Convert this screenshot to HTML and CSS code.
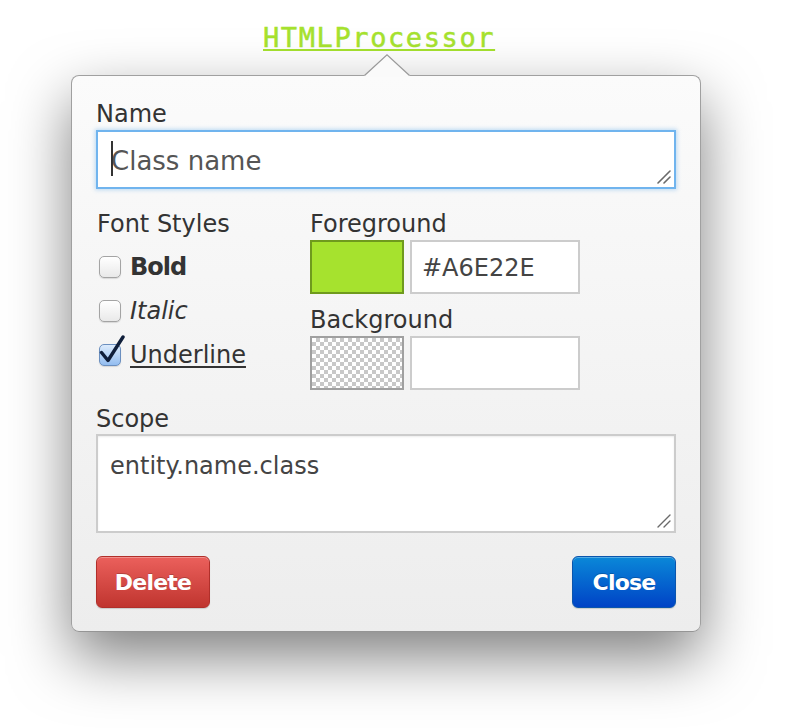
FILE: index.html
```html
<!DOCTYPE html>
<html lang="en">
<head>
<meta charset="utf-8">
<title>Theme class editor</title>
<link rel="stylesheet" href="styles.css">
</head>
<body>
<div class="stage">
  <div class="title"><span class="class-link">HTMLProcessor</span></div>
  <div class="popover">
    <svg class="arrow" width="46" height="23" viewBox="0 0 46 23">
      <path d="M0 22 L23 0.8 L46 22 L46 23 L0 23 Z" fill="#fafafa"/>
      <path d="M0.5 21.5 L23 0.8 L45.5 21.5" fill="none" stroke="#9a9a9a" stroke-width="1.2"/>
    </svg>

    <div class="field-label">Name</div>
    <div class="field field-focus name-field">
      <textarea class="input name-input" placeholder="Class name"></textarea>
      <span class="caret"></span>
      <svg class="grip" width="14" height="14" viewBox="0 0 14 14">
        <path d="M1 13 L13 1 M7 13 L13 7" stroke="#6a6a6a" stroke-width="1.6" stroke-linecap="round"/>
      </svg>
    </div>

    <div class="styles-row">
      <div class="font-styles">
        <div class="field-label">Font Styles</div>
        <div class="check-row"><span class="checkbox"></span><span class="opt opt-bold">Bold</span></div>
        <div class="check-row"><span class="checkbox"></span><span class="opt opt-italic">Italic</span></div>
        <div class="check-row">
          <span class="checkbox checked">
            <svg class="tick" width="28" height="30" viewBox="0 0 28 30">
              <path d="M3.5 17.5 L10 25.5 L25 2" fill="none" stroke="#0f1e3a" stroke-width="3.4" stroke-linecap="round" stroke-linejoin="round"/>
            </svg>
          </span>
          <span class="opt opt-underline">Underline</span>
        </div>
      </div>
      <div class="colors">
        <div class="field-label">Foreground</div>
        <div class="color-row">
          <span class="swatch swatch-fg"></span>
          <input class="hex" type="text" value="#A6E22E">
        </div>
        <div class="field-label bg-label">Background</div>
        <div class="color-row">
          <span class="swatch swatch-checker"></span>
          <input class="hex" type="text" value="">
        </div>
      </div>
    </div>

    <div class="field-label scope-label">Scope</div>
    <div class="field scope-field">
      <textarea class="input scope-input">entity.name.class</textarea>
      <svg class="grip" width="14" height="14" viewBox="0 0 14 14">
        <path d="M1 13 L13 1 M7 13 L13 7" stroke="#6a6a6a" stroke-width="1.4" stroke-linecap="round"/>
      </svg>
    </div>

    <div class="actions">
      <button class="btn btn-delete" type="button">Delete</button>
      <button class="btn btn-close" type="button">Close</button>
    </div>
  </div>
</div>
</body>
</html>
```

FILE: styles.css
```css
html, body {
  margin: 0;
  padding: 0;
  background: #ffffff;
}

body {
  min-height: 728px;
  font-family: "DejaVu Sans", "Liberation Sans", sans-serif;
  color: #333333;
}

.stage {
  padding: 22px 0 96px 71px;
  width: 630px;
}

.title {
  padding-left: 192px;
  height: 32px;
  line-height: 32px;
  margin-bottom: 21px;
}

.class-link {
  font-family: "DejaVu Sans Mono", "Liberation Mono", monospace;
  font-size: 27px;
  letter-spacing: 1.6px;
  color: #a6e22e;
  -webkit-text-stroke: 0.5px #a6e22e;
  text-decoration: underline;
  text-decoration-thickness: 2px;
  text-underline-offset: 2px;
}

.popover {
  position: relative;
  box-sizing: border-box;
  width: 630px;
  height: 557px;
  padding: 24px 24px 0 24px;
  border: 1px solid #a0a0a0;
  border-bottom-color: #959595;
  border-radius: 8px;
  background: linear-gradient(#fbfbfb, #ededed);
  box-shadow: 0 25px 60px rgba(0, 0, 0, 0.5);
}

.arrow {
  position: absolute;
  left: 292px;
  top: -22px;
  display: block;
}

.field-label {
  font-size: 24px;
  line-height: 28px;
  height: 28px;
  color: #333333;
  margin-bottom: 2px;
}

.field {
  position: relative;
  box-sizing: border-box;
  border: 2px solid #cccccc;
  background: #ffffff;
}

.field-focus {
  border-color: #70b4ee;
  box-shadow: 0 0 4px 1px rgba(112, 180, 238, 0.45);
}

.input {
  display: block;
  box-sizing: border-box;
  width: 100%;
  height: 100%;
  margin: 0;
  border: 0;
  outline: none;
  resize: none;
  overflow: hidden;
  background: transparent;
  font-family: "DejaVu Sans", "Liberation Sans", sans-serif;
  color: #444444;
}

.name-field {
  height: 59px;
}

.name-input {
  font-size: 26px;
  line-height: 30px;
  padding: 14px 13px 0 13px;
}

.name-input::placeholder {
  color: #555555;
  opacity: 1;
}

.caret {
  position: absolute;
  left: 13px;
  top: 9px;
  width: 2px;
  height: 35px;
  background: #333333;
}

.grip {
  position: absolute;
  right: 3px;
  bottom: 3px;
  display: block;
}

.styles-row {
  display: grid;
  grid-template-columns: 214px 1fr;
  margin-top: 21px;
  height: 180px;
}

.font-styles {
  padding-left: 1px;
}

.font-styles .field-label {
  margin-bottom: 7px;
}

.check-row {
  display: flex;
  align-items: center;
  gap: 9px;
  height: 44px;
  padding-left: 2px;
}

.checkbox {
  position: relative;
  box-sizing: border-box;
  width: 22px;
  height: 22px;
  flex: none;
  border: 1px solid #a4a4a4;
  border-radius: 5px;
  background: linear-gradient(#ffffff, #e9e9e9);
  box-shadow: 0 1px 1px rgba(0, 0, 0, 0.12);
}

.checkbox.checked {
  border-color: #6b8fbf;
  background: linear-gradient(#dcebfc, #93bdf0);
}

.tick {
  position: absolute;
  left: -2px;
  top: -10px;
  display: block;
}

.opt {
  font-size: 24px;
  line-height: 28px;
  color: #333333;
}

.opt-bold {
  font-weight: bold;
  letter-spacing: -1px;
}

.opt-italic {
  font-style: italic;
}

.opt-underline {
  text-decoration: underline;
  text-decoration-thickness: 2px;
  text-underline-offset: 3px;
}

.color-row {
  display: flex;
  gap: 6px;
  height: 54px;
}

.bg-label {
  margin-top: 12px;
}

.swatch {
  box-sizing: border-box;
  width: 94px;
  height: 54px;
  border: 2px solid #a0a0a0;
}

.swatch-fg {
  background: #a6e22e;
  border-color: #6f9a1d;
}

.swatch-checker {
  background-color: #ffffff;
  background-image: conic-gradient(#c8c8c8 25%, #ffffff 0 50%, #c8c8c8 0 75%, #ffffff 0);
  background-size: 8px 8px;
}

.hex {
  box-sizing: border-box;
  width: 170px;
  height: 54px;
  margin: 0;
  padding: 2px 10px 0 10px;
  border: 2px solid #cccccc;
  background: #ffffff;
  outline: none;
  font-family: "DejaVu Sans", "Liberation Sans", sans-serif;
  font-size: 24px;
  color: #444444;
}

.scope-label {
  margin-top: 15px;
  margin-bottom: 1px;
}

.scope-field {
  height: 99px;
  box-shadow: inset 0 1px 2px rgba(0, 0, 0, 0.08);
}

.scope-input {
  font-size: 24px;
  line-height: 30px;
  padding: 15px 12px 12px 12px;
}

.actions {
  display: flex;
  justify-content: space-between;
  margin-top: 23px;
}

.btn {
  box-sizing: border-box;
  height: 52px;
  margin: 0;
  padding: 0;
  border-radius: 6px;
  font-family: "DejaVu Sans", "Liberation Sans", sans-serif;
  font-weight: bold;
  font-size: 22px;
  letter-spacing: -0.8px;
  color: #ffffff;
  text-shadow: 0 -1px 0 rgba(0, 0, 0, 0.2);
  box-shadow: inset 0 1px 0 rgba(255, 255, 255, 0.3), 0 1px 1px rgba(0, 0, 0, 0.15);
  cursor: pointer;
}

.btn-delete {
  width: 114px;
  border: 1px solid #b12f2a;
  background: linear-gradient(#eb605c, #c0352f);
}

.btn-close {
  width: 104px;
  border: 1px solid #0a55ad;
  background: linear-gradient(#0a88d8, #0043c6);
}
```
